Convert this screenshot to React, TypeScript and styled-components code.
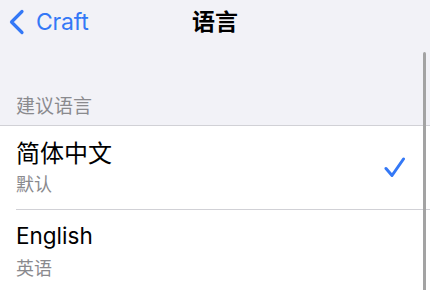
import React from "react";
import styled, { createGlobalStyle } from "styled-components";

const Global = createGlobalStyle`
  html, body { margin: 0; padding: 0; background: #f2f2f7; }
  body { font-family: Inter, "Noto Sans CJK SC", sans-serif; -webkit-font-smoothing: antialiased; }
`;

const Screen = styled.div`
  position: relative;
  width: 430px;
  height: 290px;
  overflow: hidden;
  background: #f2f2f7;
`;

const NavBar = styled.div`
  display: grid;
  grid-template-columns: 1fr auto 1fr;
  align-items: center;
  height: 44px;
`;

const BackButton = styled.div`
  display: flex;
  align-items: center;
  gap: 11px;
  padding-left: 8px;
  color: #3478f6;
  font-size: 23px;
  font-family: Inter, "Noto Sans CJK SC", sans-serif;
  letter-spacing: -0.2px;
`;

const Title = styled.div`
  font-family: "Noto Sans CJK SC", sans-serif;
  font-weight: 700;
  font-size: 23px;
  line-height: 30px;
  padding-bottom: 4px;
  color: #000;
`;

const SectionHeader = styled.div`
  display: flex;
  align-items: flex-end;
  height: 82px;
  box-sizing: border-box;
  padding: 0 16px 8px;
  font-family: "Noto Sans CJK SC", sans-serif;
  font-size: 19px;
  line-height: 24px;
  color: #8a8a8e;
  border-bottom: 1px solid #d1d1d6;
`;

const List = styled.div`
  background: #fff;
`;

const Row = styled.div`
  display: flex;
  align-items: center;
  height: 83px;
  padding-left: 16px;
`;

const RowInner = styled.div<{ $last?: boolean }>`
  flex: 1;
  height: 100%;
  display: flex;
  align-items: center;
  padding-right: 25px;
  border-bottom: ${(p) => (p.$last ? "none" : "1px solid #d1d1d6")};
`;

const Texts = styled.div`
  flex: 1;
  display: flex;
  flex-direction: column;
  gap: 2px;
  padding-bottom: 2px;
`;

const Name = styled.div<{ $cjk?: boolean }>`
  font-family: ${(p) => (p.$cjk ? `"Noto Sans CJK SC", sans-serif` : `Inter, "Noto Sans CJK SC", sans-serif`)};
  font-size: ${(p) => (p.$cjk ? "24px" : "22.5px")};
  line-height: 32px;
  color: #000;
`;

const Sub = styled.div`
  font-family: "Noto Sans CJK SC", sans-serif;
  font-size: 18px;
  line-height: 26px;
  color: #8a8a8e;
`;

const ScrollIndicator = styled.div`
  position: absolute;
  right: 4px;
  top: 52px;
  width: 3px;
  height: 250px;
  border-radius: 2px;
  background: #a3a3a3;
`;

const Chevron = () => (
  <svg width="17" height="26" viewBox="0 0 17 26" fill="none">
    <path d="M14 2.5L3.5 13L14 23.5" stroke="#3478f6" strokeWidth="3.2" strokeLinecap="round" strokeLinejoin="round" />
  </svg>
);

const Check = () => (
  <svg width="21" height="21" viewBox="0 0 21 21" fill="none">
    <path d="M2 11.5L8 18.5L19.5 2" stroke="#3478f6" strokeWidth="3" strokeLinecap="round" strokeLinejoin="round" />
  </svg>
);

const languages = [
  { name: "简体中文", sub: "默认", cjk: true, checked: true },
  { name: "English", sub: "英语", cjk: false, checked: false },
];

export default function App() {
  return (
    <Screen>
      <Global />
      <NavBar>
        <BackButton>
          <Chevron />
          <span>Craft</span>
        </BackButton>
        <Title>语言</Title>
        <div />
      </NavBar>
      <SectionHeader>建议语言</SectionHeader>
      <List>
        {languages.map((l, i) => (
          <Row key={l.name}>
            <RowInner $last={i === languages.length - 1}>
              <Texts>
                <Name $cjk={l.cjk}>{l.name}</Name>
                <Sub>{l.sub}</Sub>
              </Texts>
              {l.checked && <Check />}
            </RowInner>
          </Row>
        ))}
      </List>
      <ScrollIndicator />
    </Screen>
  );
}
